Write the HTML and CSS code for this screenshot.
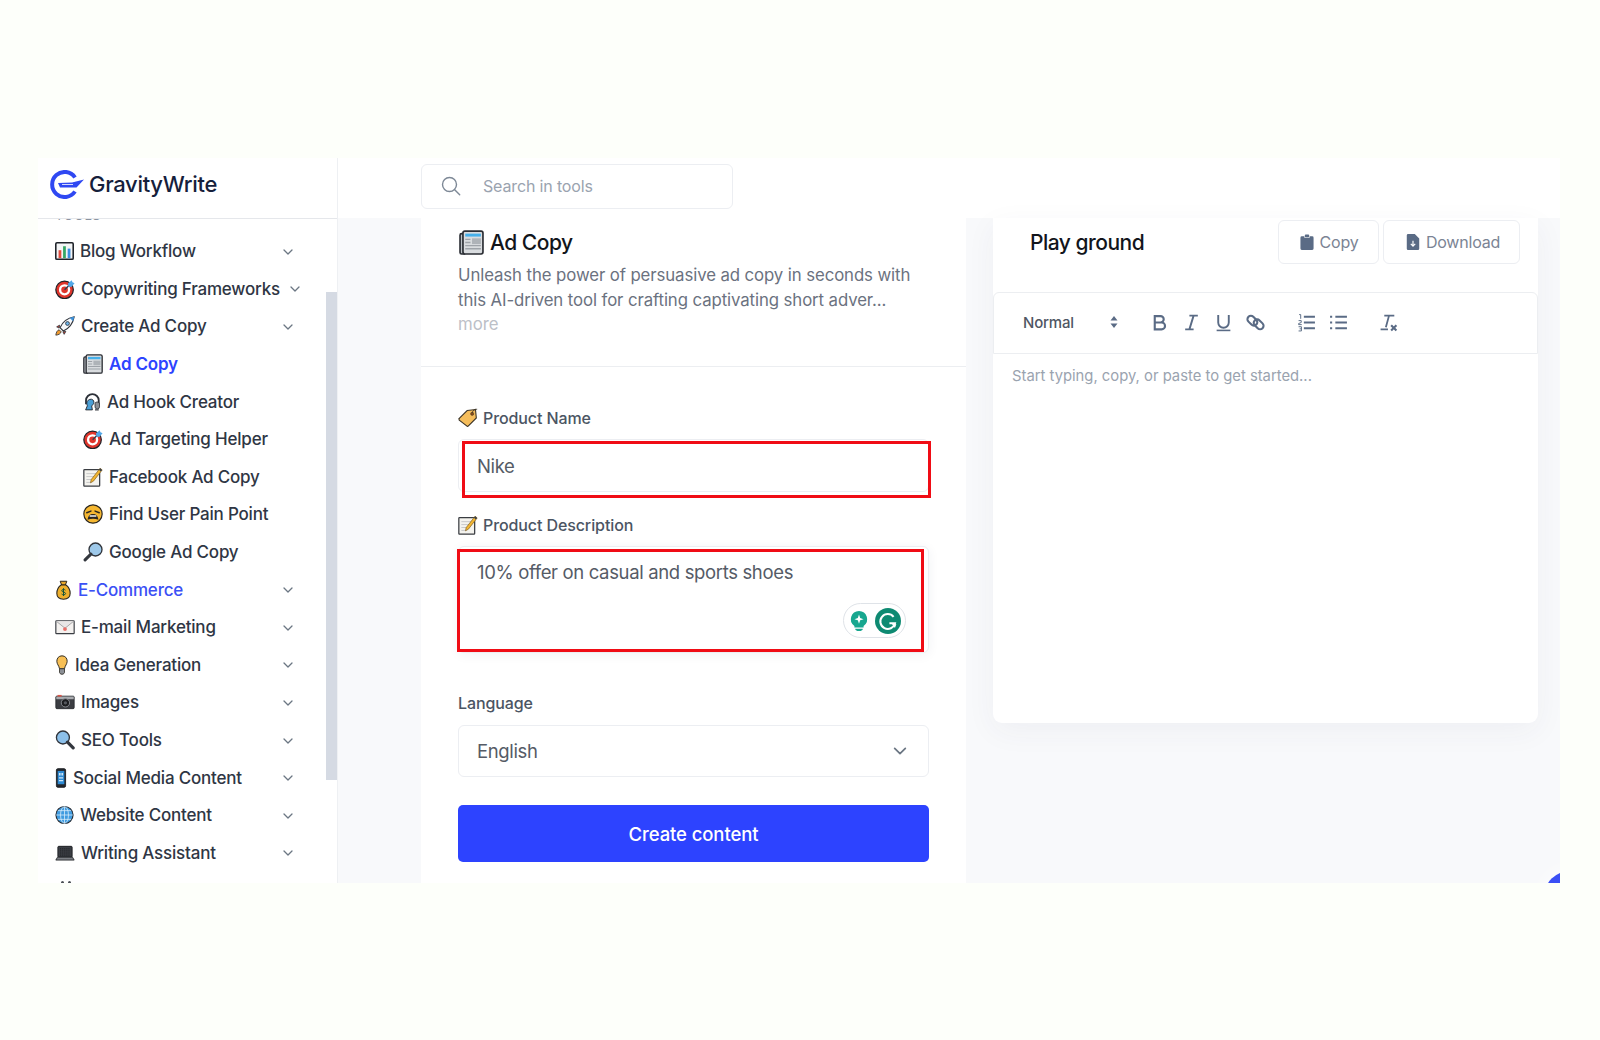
FILE: index.html
```html
<!DOCTYPE html>
<html lang="en">
<head>
<meta charset="utf-8">
<title>GravityWrite - Ad Copy</title>
<link rel="stylesheet" href="styles.css">
</head>
<body>
<svg class="defs" aria-hidden="true">
  <symbol id="i-chart" viewBox="0 0 24 24"><rect x="1" y="1.5" width="22" height="21" rx="1.5" fill="#f4f5f6" stroke="#20242b" stroke-width="2"/><rect x="4.5" y="11" width="3.5" height="10" fill="#e04a3c"/><rect x="10.2" y="6" width="3.5" height="15" fill="#35a765"/><rect x="16" y="9" width="3.5" height="12" fill="#3a8fe0"/></symbol>
  <symbol id="i-target" viewBox="0 0 24 24"><circle cx="11.5" cy="13" r="10.5" fill="#e0362c" stroke="#1f2228" stroke-width="1.5"/><circle cx="11.5" cy="13" r="6.8" fill="#fff"/><circle cx="11.5" cy="13" r="4" fill="#e0362c"/><path d="M11.5 13 18 6.5" stroke="#33404f" stroke-width="1.8"/><path d="M15.5 5.5 20 1.5l1 2.5 2.5 1-4 4.5-3.5-.5z" fill="#52a8e8"/></symbol>
  <symbol id="i-rocket" viewBox="0 0 24 24"><path d="M1 23c.3-3.4 1.7-5.8 4-6.5l2.4 2.4C6.8 21.300 4.400 22.700 1 23z" fill="#f09a2e" stroke="#30343b"/><path d="M5.500 11 2 13l3 1.500zM13 18.500 11 22l-1.500-3z" fill="#d9402f" stroke="#30343b"/><path d="M6 14C9 7.500 15 2.500 23 1c-1.500 8-6.500 14-13 17z" fill="#f6f7f9" stroke="#30343b" stroke-width="1.300"/><path d="M17.500 2.200 23 1c-.3 1.900-.7 3.700-1.300 5.400z" fill="#3f93dc"/><circle cx="15" cy="9" r="2.300" fill="#6db4ea" stroke="#30343b"/></symbol>
  <symbol id="i-news" viewBox="0 0 24 24"><path d="M4 3.500H2.500A1.500 1.500 0 0 0 1 5v16.500A1.500 1.500 0 0 0 2.500 23H6" fill="#bcc1c6" stroke="#2a2d33" stroke-width="1.600"/><rect x="3.800" y="1" width="19.200" height="22" rx="1.800" fill="#d9dcdf" stroke="#2a2d33" stroke-width="1.600"/><rect x="6" y="3.500" width="15" height="2.800" fill="#46b0ea"/><path d="M6 9h5M6 12h5M6 15h15M6 18h15" stroke="#9ea3a9" stroke-width="1.300"/><rect x="12.500" y="8" width="8.500" height="5.500" fill="#aeb3b8"/></symbol>
  <symbol id="i-hook" viewBox="0 0 24 24"><path d="M4 15V10a8.500 8.500 0 0 1 17 0v5" fill="none" stroke="#2c3038" stroke-width="2.400"/><path d="M9 8.500c3-1 6 1 5.500 4.500-.2 2-1.500 3-3 4l1 5.500H3.500L5.800 17C4 12.500 6 9.500 9 8.500z" fill="#4a9fd6" stroke="#20242b" stroke-width="1.200"/><rect x="16" y="12" width="6" height="9" rx="2.500" fill="#8c9096" stroke="#20242b"/><path d="M16 22.500h5" stroke="#20242b" stroke-width="1.500"/></symbol>
  <symbol id="i-memo" viewBox="0 0 24 24"><rect x="1" y="3" width="19" height="20" rx=".8" fill="#f4f3ee" stroke="#3a3d42" stroke-width="1.500"/><path d="M4 8h12M4 11.500h9M4 15h7M4 18.500h6" stroke="#c8c9c9" stroke-width="1.200"/><path d="M20.500 1.500 23 3.500 12.500 17l-3.500 2 .8-3.900z" fill="#f2b632" stroke="#7d5b1c" stroke-width=".8"/><path d="M20.500 1.500 23 3.500 21.500 5.400 19 3.400z" fill="#38404a"/></symbol>
  <symbol id="i-weary" viewBox="0 0 24 24"><circle cx="12" cy="12" r="11" fill="#f5b731" stroke="#2a2620" stroke-width="1.400"/><path d="M4.500 10.500 9.500 8.500M19.500 10.500 14.500 8.500" stroke="#2a2620" stroke-width="1.800" stroke-linecap="round"/><path d="M5.500 19c.5-5 3-7 6.500-7s6 2 6.500 7c-4-1.800-9-1.800-13 0z" fill="#2b2622"/><rect x="8" y="13.500" width="8" height="1.800" fill="#f2f2f0"/></symbol>
  <symbol id="i-mag-r" viewBox="0 0 24 24"><circle cx="15" cy="9" r="7.800" fill="#9ec9ea" stroke="#30343b" stroke-width="1.600"/><path d="M9.500 14.500 2.500 21.500" stroke="#33373e" stroke-width="3.600" stroke-linecap="round"/></symbol>
  <symbol id="i-mag-l" viewBox="0 0 24 24"><circle cx="9.500" cy="9" r="7.800" fill="#8cc0ea" stroke="#30343b" stroke-width="1.600"/><path d="M15 14.500 21.800 21.500" stroke="#33373e" stroke-width="3.800" stroke-linecap="round"/></symbol>
  <symbol id="i-bag" viewBox="0 0 18 24"><path d="M5 1.500h8l-1.800 4.500H6.800z" fill="#e8a72a" stroke="#2a2620" stroke-width="1.200"/><path d="M6 6h6c4 3 5 7 5 10 0 4.500-3 7-8 7s-8-2.500-8-7c0-3 1-7 5-10z" fill="#eeaf2d" stroke="#2a2620" stroke-width="1.300"/><path d="M11.300 12.200c-.8-1.200-4.400-1.300-4.400.7 0 2 4.600 1.200 4.600 3.300 0 2-3.800 2-4.800.6M9 9.800v9.400" fill="none" stroke="#17553b" stroke-width="1.200"/></symbol>
  <symbol id="i-mail" viewBox="0 0 24 24"><rect x="1" y="4.500" width="22" height="15.500" rx=".8" fill="#f4f1ef" stroke="#3b3e44" stroke-width="1.400"/><path d="m1.500 5 10.500 8.500L22.500 5" fill="#e8e6e6" stroke="#9a9b9e" stroke-width="1"/><circle cx="12" cy="14.500" r="2.300" fill="#e8706a"/></symbol>
  <symbol id="i-bulb" viewBox="0 0 14 24"><path d="M7 1C3 1 .8 4 .8 7.500c0 3.500 2.700 5.300 3.200 9h6c.5-3.700 3.200-5.500 3.200-9C13.200 4 11 1 7 1z" fill="#f7bf55" stroke="#33302a" stroke-width="1.200"/><path d="M4 16.500h6V21l-1.500 2h-3L4 21z" fill="#8c9096" stroke="#33302a" stroke-width="1"/></symbol>
  <symbol id="i-camera" viewBox="0 0 24 24"><rect x="1" y="5" width="22" height="15" rx="1.200" fill="#3b3d42" stroke="#24262a"/><rect x="1.500" y="5.500" width="21" height="3.200" fill="#a9abaf"/><rect x="3" y="3.500" width="5" height="2" fill="#d9564a"/><circle cx="12.500" cy="13" r="5" fill="#1c1d20" stroke="#85888d" stroke-width="1.200"/><circle cx="12.500" cy="13" r="2" fill="#55585e"/></symbol>
  <symbol id="i-phone" viewBox="0 0 13 24"><rect x="1" y=".8" width="11" height="22.400" rx="1.800" fill="#23262c" stroke="#15171a"/><rect x="2.500" y="3.500" width="8" height="16" fill="#2e8bd4"/><path d="M4 6h2v3H4zM7 6h2v3H7zM4 11h5v1.500H4zM4 14.500h5V16H4z" fill="#cfe6f7"/></symbol>
  <symbol id="i-globe" viewBox="0 0 24 24"><circle cx="12" cy="12" r="10.800" fill="#3f9be0" stroke="#23272e" stroke-width="1.400"/><path d="M12 1.500v21M1.500 12h21M3.500 6.500h17M3.500 17.500h17" stroke="#d7ecfa" stroke-width="1"/><ellipse cx="12" cy="12" rx="5" ry="10.500" fill="none" stroke="#d7ecfa" stroke-width="1"/></symbol>
  <symbol id="i-laptop" viewBox="0 0 24 24"><rect x="3.500" y="4" width="17" height="13" rx="1" fill="#3b3e44" stroke="#1e2024" stroke-width="1.200"/><path d="M6 7h12M6 9.500h12M6 12h12M6 14.500h12" stroke="#1f2125" stroke-width="1.200" stroke-dasharray="1.500 1"/><path d="M3 17h18l2 3.500H1z" fill="#7d8086" stroke="#1e2024"/></symbol>
  <symbol id="i-tag" viewBox="0 0 24 24"><path d="M1.500 12.500 11 3l10-1.200L22 12l-9.500 9.500a1.500 1.500 0 0 1-2.100 0l-8.900-7a1.400 1.400 0 0 1 .5-2z" fill="#f5bd5b" stroke="#3a3225" stroke-width="1.300"/><circle cx="17" cy="7" r="1.900" fill="#8a4a16" stroke="#3a3225" stroke-width=".6"/><path d="M17 6C17.500 3 20 1 23 1.500" fill="none" stroke="#3a3225" stroke-width="1"/></symbol>
  <symbol id="i-chev" viewBox="0 0 10 6"><path d="M1 1l4 4 4-4" fill="none" stroke="#6b7683" stroke-width="1.300" stroke-linecap="round" stroke-linejoin="round"/></symbol>
</svg>

<div class="app">
  <aside class="sidebar">
    <div class="brand">
      <svg class="brand-mark" viewBox="0 0 34 29" aria-hidden="true">
        <path d="M25 7.500A12.500 12.500 0 1 0 25 21.500" fill="none" stroke="#2f48f2" stroke-width="4"/>
        <path d="M8 13 22 12.600 34 9.500 26.500 17.500H10z" fill="#2f48f2"/>
        <path d="M12 14.500h11" stroke="#fff" stroke-width=".8"/>
      </svg>
      <span class="brand-name">GravityWrite</span>
    </div>
    <nav class="nav">
      <div class="nav-label">TOOLS</div>
      <a class="row"><svg class="ic w19"><use href="#i-chart"/></svg><span>Blog Workflow</span><svg class="chev"><use href="#i-chev"/></svg></a>
      <a class="row"><svg class="ic w20"><use href="#i-target"/></svg><span>Copywriting Frameworks</span><svg class="chev"><use href="#i-chev"/></svg></a>
      <a class="row"><svg class="ic w20"><use href="#i-rocket"/></svg><span>Create Ad Copy</span><svg class="chev"><use href="#i-chev"/></svg></a>
      <a class="row sub current"><svg class="ic w20"><use href="#i-news"/></svg><span>Ad Copy</span></a>
      <a class="row sub"><svg class="ic w18"><use href="#i-hook"/></svg><span>Ad Hook Creator</span></a>
      <a class="row sub"><svg class="ic w20"><use href="#i-target"/></svg><span>Ad Targeting Helper</span></a>
      <a class="row sub"><svg class="ic w20"><use href="#i-memo"/></svg><span>Facebook Ad Copy</span></a>
      <a class="row sub"><svg class="ic w20"><use href="#i-weary"/></svg><span>Find User Pain Point</span></a>
      <a class="row sub"><svg class="ic w20"><use href="#i-mag-r"/></svg><span>Google Ad Copy</span></a>
      <a class="row open"><svg class="ic w17"><use href="#i-bag"/></svg><span>E-Commerce</span><svg class="chev"><use href="#i-chev"/></svg></a>
      <a class="row"><svg class="ic w20"><use href="#i-mail"/></svg><span>E-mail Marketing</span><svg class="chev"><use href="#i-chev"/></svg></a>
      <a class="row"><svg class="ic w14"><use href="#i-bulb"/></svg><span>Idea Generation</span><svg class="chev"><use href="#i-chev"/></svg></a>
      <a class="row"><svg class="ic w20"><use href="#i-camera"/></svg><span>Images</span><svg class="chev"><use href="#i-chev"/></svg></a>
      <a class="row"><svg class="ic w20"><use href="#i-mag-l"/></svg><span>SEO Tools</span><svg class="chev"><use href="#i-chev"/></svg></a>
      <a class="row"><svg class="ic w12"><use href="#i-phone"/></svg><span>Social Media Content</span><svg class="chev"><use href="#i-chev"/></svg></a>
      <a class="row"><svg class="ic w19"><use href="#i-globe"/></svg><span>Website Content</span><svg class="chev"><use href="#i-chev"/></svg></a>
      <a class="row"><svg class="ic w20"><use href="#i-laptop"/></svg><span>Writing Assistant</span><svg class="chev"><use href="#i-chev"/></svg></a>
      <div class="nav-next"><i></i><i></i></div>
      <div class="scrollbar"></div>
    </nav>
  </aside>

  <div class="main">
    <header class="topbar">
      <div class="search">
        <svg class="search-ic" viewBox="0 0 20 20" aria-hidden="true"><circle cx="8.500" cy="8.500" r="7" fill="none" stroke="#7d8896" stroke-width="1.400"/><path d="m13.700 13.700 5 5" stroke="#7d8896" stroke-width="1.400" stroke-linecap="round"/></svg>
        <span>Search in tools</span>
      </div>
    </header>

    <div class="content">
      <section class="tool">
        <div class="tool-head">
          <h1 class="title"><svg class="title-ic"><use href="#i-news"/></svg>Ad Copy</h1>
          <p class="desc">Unleash the power of persuasive ad copy in seconds with this AI-driven tool for crafting captivating short adver...</p>
          <span class="more">more</span>
        </div>
        <form class="form">
          <label class="label"><svg class="label-ic"><use href="#i-tag"/></svg>Product Name</label>
          <div class="field field-name">Nike<div class="mark mark-name"></div></div>
          <label class="label label-desc"><svg class="label-ic"><use href="#i-memo"/></svg>Product Description</label>
          <div class="field field-desc">10% offer on casual and sports shoes
            <div class="mark mark-desc"></div>
            <div class="grammarly">
              <svg viewBox="0 0 24 24" class="g-bulb" aria-hidden="true"><path d="M12 1a9 9 0 0 0-5 16.400V19h10v-1.600A9 9 0 0 0 12 1z" fill="#17a78f"/><path d="M8 20.500h8v1L14 23h-4l-2-1.500z" fill="#17a78f"/><path d="m12 5 1.300 3.700L17 10l-3.700 1.300L12 15l-1.300-3.700L7 10l3.700-1.300z" fill="#fff"/></svg>
              <svg viewBox="0 0 28 28" class="g-logo" aria-hidden="true"><circle cx="14" cy="14" r="14" fill="#0e8a72"/><path d="M20 9.500A8 8 0 1 0 21.500 16.500H15.500" fill="none" stroke="#fff" stroke-width="2.200"/><path d="m21.500 21.500-3.500-4.500 5 .5z" fill="#fff"/></svg>
            </div>
          </div>
          <label class="label label-lang">Language</label>
          <div class="field field-select"><span>English</span><svg class="select-chev"><use href="#i-chev"/></svg></div>
          <button type="button" class="submit">Create content</button>
        </form>
      </section>

      <section class="play">
        <div class="play-head">
          <h2 class="play-title">Play ground</h2>
          <div class="actions">
            <button type="button" class="action action-copy"><svg viewBox="0 0 16 18" class="action-ic" aria-hidden="true"><path d="M2 2.500h3V4h6V2.500h3A1.500 1.500 0 0 1 15.500 4v12.500A1.500 1.500 0 0 1 14 18H2A1.500 1.500 0 0 1 .5 16.500V4A1.500 1.500 0 0 1 2 2.500z" fill="#5a6b85"/><rect x="5.500" y=".5" width="5" height="3" rx="1" fill="#5a6b85"/></svg>Copy</button>
            <button type="button" class="action action-dl"><svg viewBox="0 0 14 18" class="action-ic" aria-hidden="true"><path d="M1.500 0H9l5 5v11.500a1.500 1.500 0 0 1-1.500 1.500h-11A1.500 1.500 0 0 1 0 16.500v-15A1.500 1.500 0 0 1 1.500 0z" fill="#5a6b85"/><path d="M7 7.500v6M4.500 11.200 7 13.700l2.500-2.500" fill="none" stroke="#fff" stroke-width="1.300"/></svg>Download</button>
          </div>
        </div>
        <div class="toolbar">
          <span class="picker">Normal<svg viewBox="0 0 8 14" class="picker-ic" aria-hidden="true"><path d="M4 1 7.500 5.500H.5zM4 13 .5 8.500h7z" fill="#5a6b85"/></svg></span>
          <div class="tgroup tgroup-format">
            <span class="tbtn"><svg viewBox="0 0 18 18"><path d="M4.500 3h5.500a3 3 0 0 1 0 6H4.500zM4.500 9H11a3.200 3.200 0 0 1 0 6.500H4.500z" fill="none" stroke="#5a6b85" stroke-width="2"/></svg></span>
            <span class="tbtn"><svg viewBox="0 0 18 18"><path d="M7 2.500h8M3 15.500h8M11 2.500l-4 13" fill="none" stroke="#5a6b85" stroke-width="1.800"/></svg></span>
            <span class="tbtn"><svg viewBox="0 0 18 18"><path d="M4 2v7a5 5 0 0 0 10 0V2" fill="none" stroke="#5a6b85" stroke-width="1.800"/><path d="M2.500 16.500h13" stroke="#5a6b85" stroke-width="1.500"/></svg></span>
            <span class="tbtn"><svg viewBox="0 0 18 18"><rect x=".8" y="4" width="10.500" height="6.500" rx="3.250" transform="rotate(45 6 7.250)" fill="none" stroke="#5a6b85" stroke-width="2"/><rect x="6.700" y="7.500" width="10.500" height="6.500" rx="3.250" transform="rotate(45 12 10.750)" fill="none" stroke="#5a6b85" stroke-width="2"/></svg></span>
          </div>
          <div class="tgroup">
            <span class="tbtn"><svg viewBox="0 0 18 18"><path d="M6.500 3.500H17M6.500 9H17M6.500 14.500H17" stroke="#5a6b85" stroke-width="1.800"/><path d="M2 1.500h1.500v4M1.500 7.200h2.500V9l-2.500 1v1h3M1.500 13h2.700v4H1.500M2.500 15h1.500" fill="none" stroke="#5a6b85" stroke-width=".9"/></svg></span>
            <span class="tbtn"><svg viewBox="0 0 18 18"><path d="M6 3.500h11M6 9h11M6 14.500h11" stroke="#5a6b85" stroke-width="1.800"/><path d="M1 3.500h2M1 9h2M1 14.500h2" stroke="#5a6b85" stroke-width="1.800"/></svg></span>
          </div>
          <div class="tgroup">
            <span class="tbtn"><svg viewBox="0 0 18 18"><path d="M5 2.500h9.500M9.500 2.500 6.500 13.500M1.500 15.500h7" fill="none" stroke="#5a6b85" stroke-width="1.700"/><path d="m11.500 11.500 5 5M16.500 11.500l-5 5" stroke="#5a6b85" stroke-width="2"/></svg></span>
          </div>
        </div>
        <div class="editor">Start typing, copy, or paste to get started...</div>
      </section>
    </div>
    <div class="launcher"></div>
  </div>
</div>
</body>
</html>
```
FILE: styles.css
```css
* { box-sizing: border-box; }
html, body { margin: 0; height: 100%; }
body {
  background: #fdfffa;
  font-family: Inter, "Liberation Sans", sans-serif;
  padding: 158px 40px 0 38px;
  color: #2b3240;
}
.defs { position: absolute; width: 0; height: 0; }

.app { display: flex; height: 725px; overflow: hidden; position: relative; background: #f8f9fb; }

/* sidebar */
.sidebar { width: 300px; flex: none; background: #fff; border-right: 1px solid #eef0f3; display: flex; flex-direction: column; }
.brand { height: 61px; flex: none; display: flex; align-items: center; padding: 0 0 8px 12px; gap: 5px; border-bottom: 1px solid #e5e7eb; }
.brand-mark { width: 34px; height: 29px; flex: none; }
.brand-name { font-size: 22px; font-weight: 500; color: #15203b; letter-spacing: -.3px; }
.nav { flex: 1; position: relative; overflow: hidden; }
.nav-label { font-size: 13px; line-height: 14px; margin: -11px 0 10.500px 17px; color: #8b93a0; letter-spacing: .5px; }
.row { display: flex; align-items: center; gap: 6px; height: 37.600px; padding: 0 44px 0 17px; font-size: 17px; font-weight: 500; color: #2f3644; letter-spacing: -.2px; white-space: nowrap; }
.row span { margin-right: 4px; }
.row.sub { padding-left: 45px; }
.row.current { color: #2d43ff; font-weight: 600; }
.row.open { color: #3b50f5; }
.chev { width: 10px; height: 6px; margin-left: auto; flex: none; margin-top: 1px; }
.ic { height: 20px; flex: none; }
.w12 { width: 12px; } .w14 { width: 14px; } .w17 { width: 17px; } .w18 { width: 18px; } .w19 { width: 19px; } .w20 { width: 20px; }
.nav-next { display: flex; gap: 4px; padding: 9px 0 0 23px; }
.nav-next i { width: 3px; height: 3px; background: #4a4e55; border-radius: 50%; }
.scrollbar { position: absolute; right: 0; top: 73px; width: 11px; height: 488px; background: #d5dae3; }

/* main */
.main { flex: 1; min-width: 0; display: flex; flex-direction: column; }
.topbar { height: 60px; flex: none; background: #fff; padding: 6px 0 0 83px; }
.search { width: 312px; height: 45px; border: 1px solid #eceef2; border-radius: 6px; background: #fff; display: flex; align-items: center; padding: 0 0 2px 19px; gap: 22px; font-size: 16px; color: #9aa3af; letter-spacing: -.15px; }
.search-ic { width: 20px; height: 20px; }
.content { flex: 1; display: flex; gap: 27px; padding-left: 83px; min-height: 0; }

.tool { width: 545px; flex: none; background: #fff; }
.tool-head { padding: 9px 37px 29px; border-bottom: 1px solid #eceef1; height: 149px; }
.title { margin: 0; display: flex; align-items: center; height: 30px; gap: 6px; padding-left: 1px; font-size: 21px; font-weight: 500; color: #12151b; letter-spacing: -.5px; }
.title-ic { width: 25px; height: 25px; }
.desc { margin: 6px 0 0; font-size: 16.800px; line-height: 24.500px; color: #6b7280; letter-spacing: -.1px; }
.more { display: block; font-size: 16.800px; line-height: 24.500px; color: #bcc0c7; }

.form { padding: 39px 37px 0; }
.label { display: flex; align-items: center; gap: 5px; height: 24px; font-size: 16px; font-weight: 500; color: #4b5563; letter-spacing: -.1px; }
.label-ic { width: 20px; height: 20px; flex: none; }
.field { position: relative; background: #fff; border: 1px solid #eceef2; border-radius: 6px; padding-left: 18px; font-size: 18.500px; color: #555b66; letter-spacing: -.35px; }
.field-name { height: 53px; margin-top: 9px; padding-top: 15px; }
.label-desc { margin-top: 21px; }
.field-desc { height: 107px; padding-top: 14px; box-shadow: 0 2px 12px rgba(40, 50, 90, .06); margin-top: 9px; }
.label-lang { margin-top: 38px; }
.field-select { height: 52px; margin-top: 10px; display: flex; align-items: center; }
.select-chev { width: 14px; height: 8px; margin-left: auto; margin-right: 21px; }
.mark { position: absolute; border: 3px solid #f00c15; }
.mark-name { left: 3px; top: 1px; width: 469px; height: 57px; }
.mark-desc { left: -2px; top: 2px; width: 467px; height: 103px; }
.grammarly { position: absolute; right: 22px; bottom: 14px; width: 63px; height: 35px; border: 1px solid #dfe3e8; border-radius: 18px; background: #fff; display: flex; align-items: center; gap: 5px; padding-left: 4px; }
.g-bulb { width: 22px; height: 26px; }
.g-logo { width: 26px; height: 26px; }
.submit { display: block; width: 100%; height: 57px; margin-top: 28px; border: 0; border-radius: 5px; background: #2d43ff; color: #fff; font: 500 18.500px Inter, "Liberation Sans", sans-serif; letter-spacing: -.1px; }

/* playground */
.play { width: 545px; flex: none; height: 505px; background: #fff; border-radius: 0 0 9px 9px; box-shadow: 0 8px 30px rgba(50, 60, 100, .05); }
.play-head { height: 74px; display: flex; align-items: flex-start; justify-content: space-between; padding: 2px 18px 0 37px; }
.play-title { margin: 0; line-height: 46px; font-size: 21px; font-weight: 500; color: #12151b; letter-spacing: -.5px; }
.actions { display: flex; gap: 4px; }
.action { height: 44px; border: 1px solid #eceef2; border-radius: 6px; background: #fff; display: flex; align-items: center; justify-content: center; gap: 6px; font: 400 16px Inter, "Liberation Sans", sans-serif; color: #7b8494; letter-spacing: -.2px; padding: 0 0 0 1px; }
.action-copy { width: 101px; }
.action-dl { width: 137px; padding-left: 3px; }
.action-ic { width: 14px; height: 16px; }
.toolbar { height: 62px; border: 1px solid #eceef1; border-radius: 6px 6px 0 0; display: flex; align-items: center; padding: 0 0 2px 29px; }
.picker { width: 120px; display: flex; align-items: center; font-size: 15px; font-weight: 500; color: #4f5663; letter-spacing: -.2px; }
.picker-ic { width: 8px; height: 14px; margin-left: 36px; }
.tgroup { display: flex; margin-right: 18px; }
.tgroup-format { margin-right: 19px; }
.tbtn { width: 32px; height: 32px; display: flex; align-items: center; justify-content: center; }
.tbtn svg { width: 19px; height: 19px; }
.editor { padding: 12px 19px; font-size: 14.800px; line-height: 20px; color: #9aa3af; }

.launcher { position: absolute; right: -36px; bottom: -40px; width: 52px; height: 52px; border-radius: 50%; background: #3b4ff5; box-shadow: 0 0 22px rgba(255, 255, 255, .9); }
```
